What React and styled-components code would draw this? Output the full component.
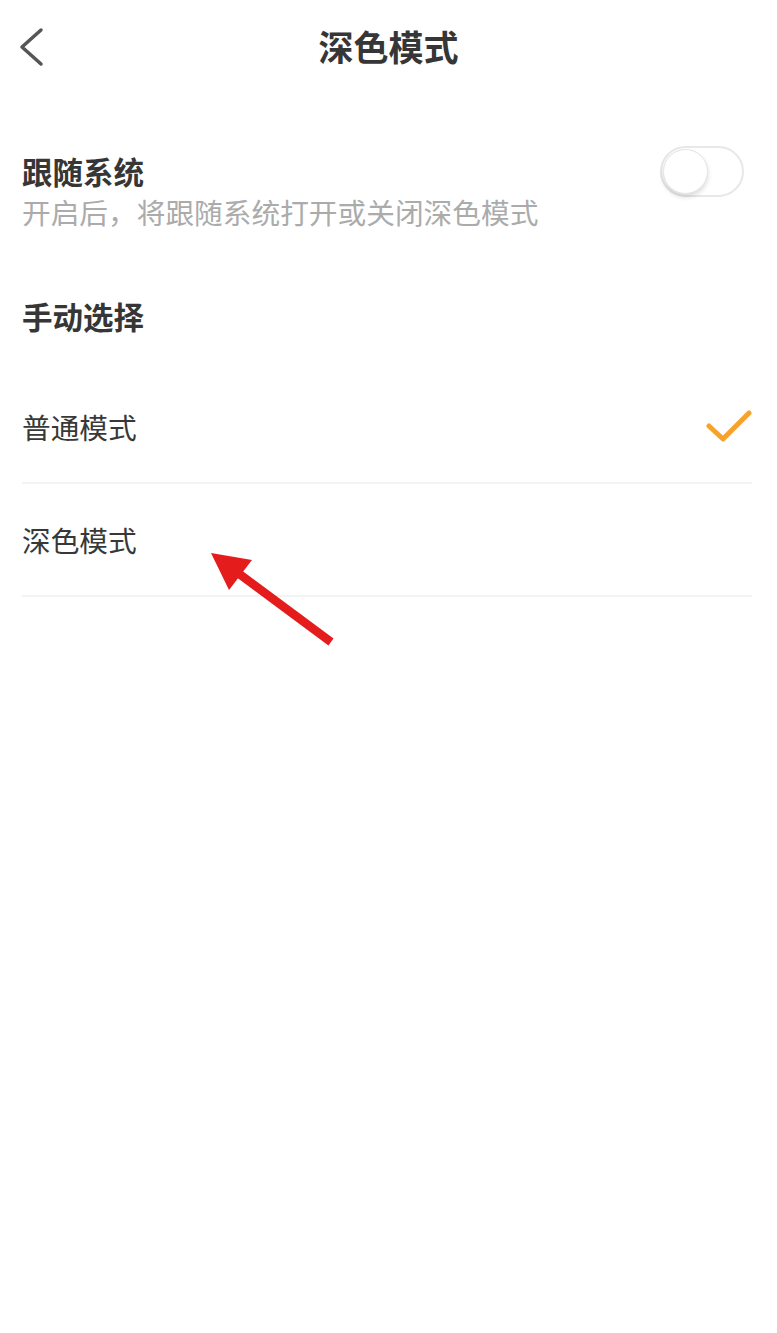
import React from "react";
import styled, { createGlobalStyle } from "styled-components";

const Global = createGlobalStyle`
  html, body { margin: 0; padding: 0; background: #fff; }
  body { font-family: "Noto Sans CJK SC", "Noto Sans", sans-serif; }
`;

const Page = styled.div`
  position: relative;
  width: 777px;
  min-height: 1333px;
  background: #fff;
  color: #333;
`;

const Header = styled.header`
  display: grid;
  grid-template-columns: 1fr auto 1fr;
  align-items: center;
  height: 94px;
`;

const BackButton = styled.button`
  justify-self: start;
  display: flex;
  align-items: center;
  margin-left: 18px;
  padding: 0;
  border: 0;
  background: none;
  cursor: pointer;
`;

const Title = styled.h1`
  margin: -3px 0 0;
  font-size: 35px;
  line-height: 1;
  font-weight: 700;
  color: #363636;
`;

const FollowRow = styled.section`
  display: flex;
  justify-content: space-between;
  align-items: flex-start;
  padding: 52px 25px 0 22px;
`;

const TextCol = styled.div`
  display: flex;
  flex-direction: column;
`;

const SectionTitle = styled.div`
  font-size: 30.5px;
  line-height: 50px;
  font-weight: 700;
  color: #363636;
  margin-top: ${(p) => p.$top || 0}px;
  padding: ${(p) => (p.$pad ? "0 25px 0 22px" : "0")};
`;

const Subtitle = styled.div`
  font-size: 28.7px;
  line-height: 32px;
  color: #ababab;
`;

const Toggle = styled.div`
  box-sizing: border-box;
  width: 84px;
  height: 51px;
  margin-right: 8px;
  border-radius: 26px;
  border: 2px solid #e8e8e8;
  background: #fff;
  padding: 1px;
  display: flex;
  align-items: center;
`;

const Knob = styled.div`
  width: 45px;
  height: 45px;
  border-radius: 50%;
  background: #fff;
  box-sizing: border-box;
  border: 1px solid #e4e4e4;
  box-shadow: 0 3px 5px rgba(0, 0, 0, 0.14);
`;

const List = styled.div`
  margin-top: 30px;
  padding: 0 25px 0 22px;
`;

const Row = styled.div`
  display: flex;
  align-items: center;
  justify-content: space-between;
  height: 111px;
  border-bottom: 2px solid #f3f3f3;
`;

const RowLabel = styled.span`
  font-size: 28.7px;
  color: #383838;
`;

const Annotation = styled.svg`
  position: absolute;
  left: 200px;
  top: 540px;
  pointer-events: none;
`;

const Check = () => (
  <svg width="46" height="34" viewBox="0 0 46 34">
    <path
      d="M3 16 L17 29 L43 3"
      fill="none"
      stroke="#f8a22c"
      strokeWidth="5"
      strokeLinecap="round"
      strokeLinejoin="round"
    />
  </svg>
);

export default function App() {
  return (
    <Page>
      <Global />
      <Header>
        <BackButton aria-label="back">
          <svg width="26" height="40" viewBox="0 0 26 40">
            <path
              d="M23 3 L4 20 L23 37"
              fill="none"
              stroke="#555"
              strokeWidth="3.5"
              strokeLinecap="round"
              strokeLinejoin="round"
            />
          </svg>
        </BackButton>
        <Title>深色模式</Title>
        <div />
      </Header>

      <FollowRow>
        <TextCol>
          <SectionTitle>跟随系统</SectionTitle>
          <Subtitle>开启后，将跟随系统打开或关闭深色模式</Subtitle>
        </TextCol>
        <Toggle>
          <Knob />
        </Toggle>
      </FollowRow>

      <SectionTitle $top={63} $pad>
        手动选择
      </SectionTitle>

      <List>
        <Row>
          <RowLabel>普通模式</RowLabel>
          <Check />
        </Row>
        <Row>
          <RowLabel>深色模式</RowLabel>
        </Row>
      </List>

      <Annotation width="150" height="120" viewBox="0 0 150 120">
        <line x1="38" y1="33" x2="131" y2="102" stroke="#e41c1c" strokeWidth="8.5" />
        <polygon points="11,13 52,20 29,50" fill="#e41c1c" />
      </Annotation>
    </Page>
  );
}
